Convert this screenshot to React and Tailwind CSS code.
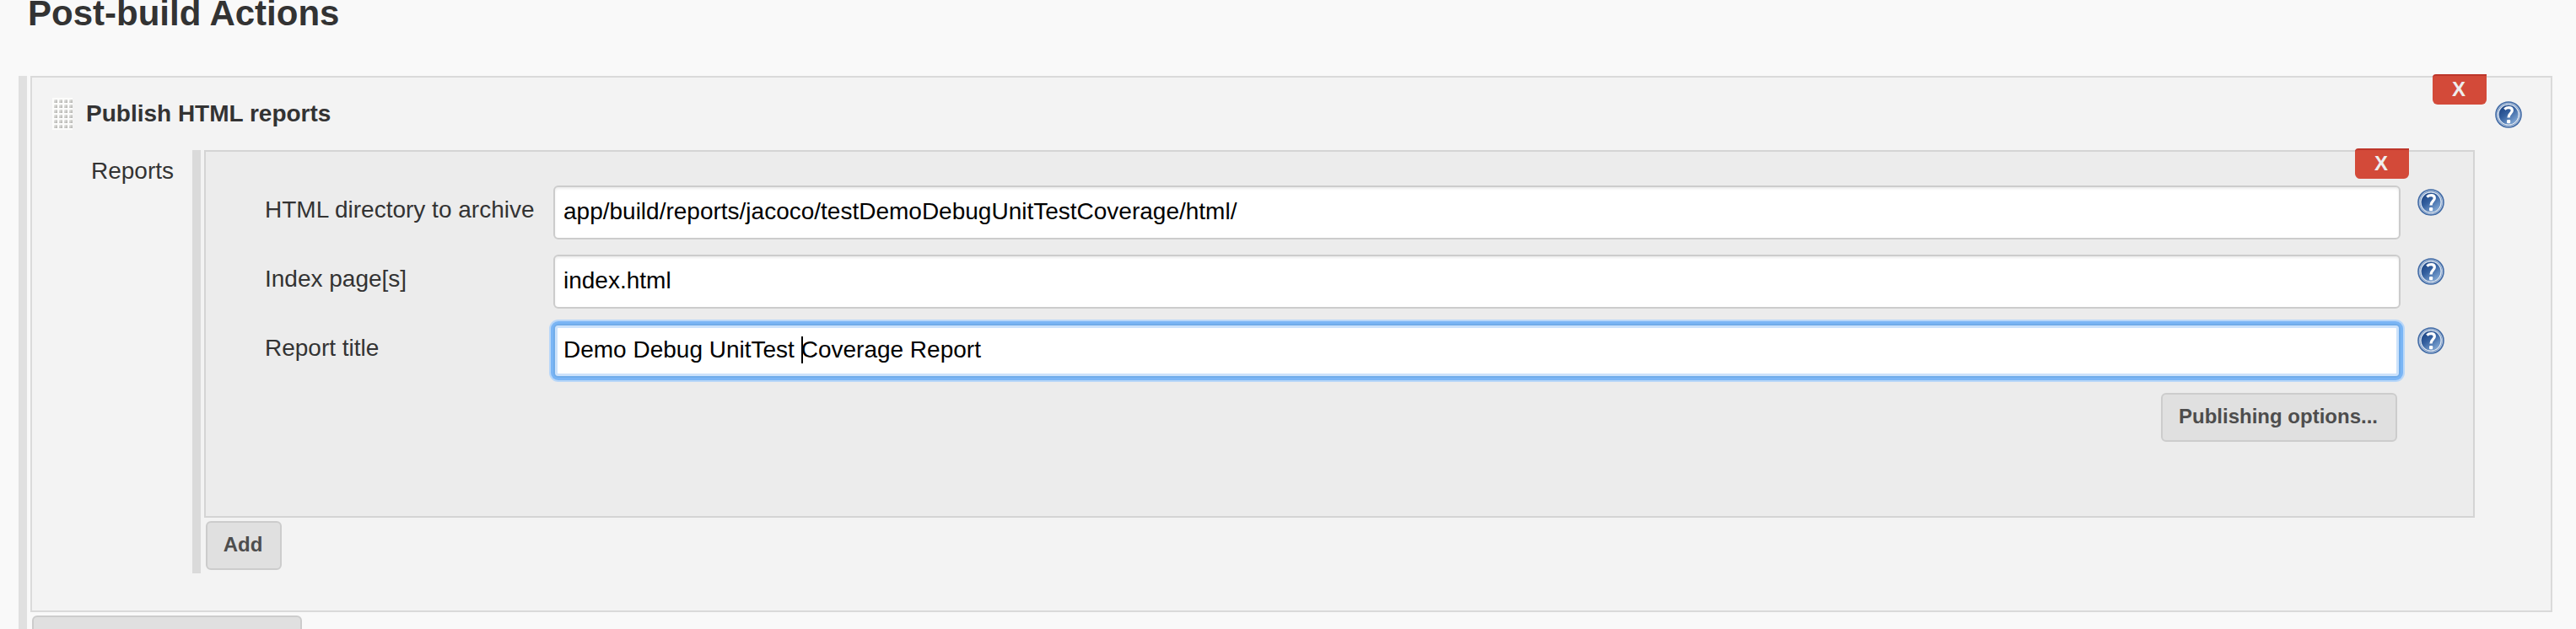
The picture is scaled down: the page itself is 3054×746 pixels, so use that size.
function HelpIcon() {
  return (
    <svg viewBox="0 0 32 32" className="block size-8 shrink-0">
      <defs>
        <linearGradient id="helpFill" x1="0.1" y1="0.1" x2="0.8" y2="1">
          <stop offset="0" stopColor="#1d4585" />
          <stop offset="0.4" stopColor="#34609f" />
          <stop offset="1" stopColor="#86acd8" />
        </linearGradient>
      </defs>
      <circle cx="16" cy="16" r="15.8" fill="#406aa5" />
      <circle cx="16" cy="16" r="13.7" fill="none" stroke="#b4c6df" strokeWidth="1.1" />
      <circle cx="16" cy="16" r="12" fill="none" stroke="#dbe5f1" strokeWidth="1.7" />
      <circle cx="16" cy="16" r="11.3" fill="url(#helpFill)" />
      <path d="M11.3 9.6C12.8 8.2 14.6 7.7 16.4 7.7C19.1 7.7 20.3 9.2 20.3 11.1C20.3 14.3 16 14.6 16 19.4" fill="none" stroke="#fff" strokeWidth="3.3" />
      <rect x="14" y="22" width="4.2" height="4.2" rx="1.2" fill="#fff" />
    </svg>
  );
}

function Grip() {
  const dots = [];
  for (let r = 0; r < 6; r++) {
    for (let c = 0; c < 4; c++) {
      dots.push(<rect key={r + '-' + c} x={2 + c * 6} y={2 + r * 6} width="4" height="4" rx="0.6" fill="url(#gripDot)" />);
    }
  }
  return (
    <svg viewBox="0 0 24 38" className="block h-[38px] w-6 shrink-0">
      <defs>
        <linearGradient id="gripDot" x1="0" y1="0" x2="1" y2="1">
          <stop offset="0" stopColor="#f0f0ee" />
          <stop offset="1" stopColor="#adada9" />
        </linearGradient>
      </defs>
      <rect width="24" height="38" fill="#fcfcfb" />
      {dots}
    </svg>
  );
}

function DeleteButton() {
  return (
    <button className="flex h-9 w-16 items-center justify-center rounded-b-[6px] rounded-tl-[4px] border-t-2 border-[#bd362a] bg-[#d34a39] pb-0.5 pr-0.5 text-[24px] font-bold leading-none text-[#eeeeee]">
      X
    </button>
  );
}

function Row({ label, children, focused }) {
  return (
    <div className="flex h-16 items-start">
      <div className="w-[342px] shrink-0 whitespace-nowrap pt-[13px] text-[28px] leading-8 text-[#333]">{label}</div>
      <div
        className={
          focused
            ? 'flex h-16 w-[2190px] shrink-0 items-center whitespace-pre rounded-[6px] border-2 border-[#70acea] bg-white pb-0.5 pl-[10px] text-[28px] leading-8 text-black shadow-[0_0_0_3px_#7ab5f5,0_0_0_5px_#b9d7f8,inset_0_0_0_3px_#cce2fb]'
            : 'flex h-16 w-[2190px] shrink-0 items-center whitespace-pre rounded-[6px] border-2 border-[#ccc] bg-white pb-0.5 pl-[10px] text-[28px] leading-8 text-black shadow-[inset_0_2px_3px_rgba(0,0,0,0.075)]'
        }
      >
        {children}
      </div>
      <div className="ml-5 pt-1">
        <HelpIcon />
      </div>
    </div>
  );
}

export default function App() {
  return (
    <div className={'h-[746px] w-[3054px] overflow-hidden bg-[#f9f9f9] text-[#333] font-["Liberation_Sans",Arial,sans-serif]'}>
      <h1 className="h-[90px] pl-[33px] text-[42px] font-bold leading-[32px]">Post-build Actions</h1>
      <div className="flex h-[656px] pl-[22px]">
        <div className="w-[10px] shrink-0 bg-[#e0e0e0]" />
        <div className="ml-1">
          <section className="relative h-[636px] w-[2990px] border-2 border-[#dadada] bg-[#f3f3f3]">
            <div className="absolute right-[76px] -top-1"><DeleteButton /></div>
            <div className="flex pl-6 pt-6">
              <Grip />
              <h2 className="ml-4 mt-[3px] w-[2856px] text-[28px] font-bold leading-8">Publish HTML reports</h2>
              <div className="pt-1"><HelpIcon /></div>
            </div>
            <div className="mt-6 flex">
              <div className="w-[190px] shrink-0 pl-[70px] pt-[9px] text-[28px] leading-8">Reports</div>
              <div className="h-[502px] w-[10px] shrink-0 bg-[#dadada]" />
              <div className="ml-1">
                <section className="relative flex h-[436px] w-[2692px] flex-col gap-[18px] border-2 border-[#d4d4d4] bg-[#ececec] pl-[70px] pt-10">
                  <div className="absolute right-[76px] -top-1"><DeleteButton /></div>
                  <Row label="HTML directory to archive">app/build/reports/jacoco/testDemoDebugUnitTestCoverage/html/</Row>
                  <Row label="Index page[s]">index.html</Row>
                  <Row label="Report title" focused>
                    <span>{'Demo Debug UnitTest '}</span>
                    <span className="-mr-0.5 h-8 w-[2px] bg-black" />
                    <span>Coverage Report</span>
                  </Row>
                  <button className="ml-[2248px] flex h-[58px] w-[280px] items-center justify-center rounded-[6px] border-2 border-[#ccc] bg-[#e0e0e0] pb-0.5 pr-0.5 text-[24px] font-bold text-[#4d4d4d]">Publishing options...</button>
                </section>
                <button className="ml-0.5 mt-1 flex h-[58px] w-[90px] items-center justify-center rounded-[6px] border-2 border-[#ccc] bg-[#e0e0e0] pb-0.5 pr-0.5 text-[24px] font-bold text-[#4d4d4d]">Add</button>
              </div>
            </div>
          </section>
          <button aria-label="Add post-build action" className="ml-0.5 mt-1 block h-[58px] w-[320px] rounded-[6px] border-2 border-[#ccc] bg-[#e0e0e0]" />
        </div>
      </div>
    </div>
  );
}
